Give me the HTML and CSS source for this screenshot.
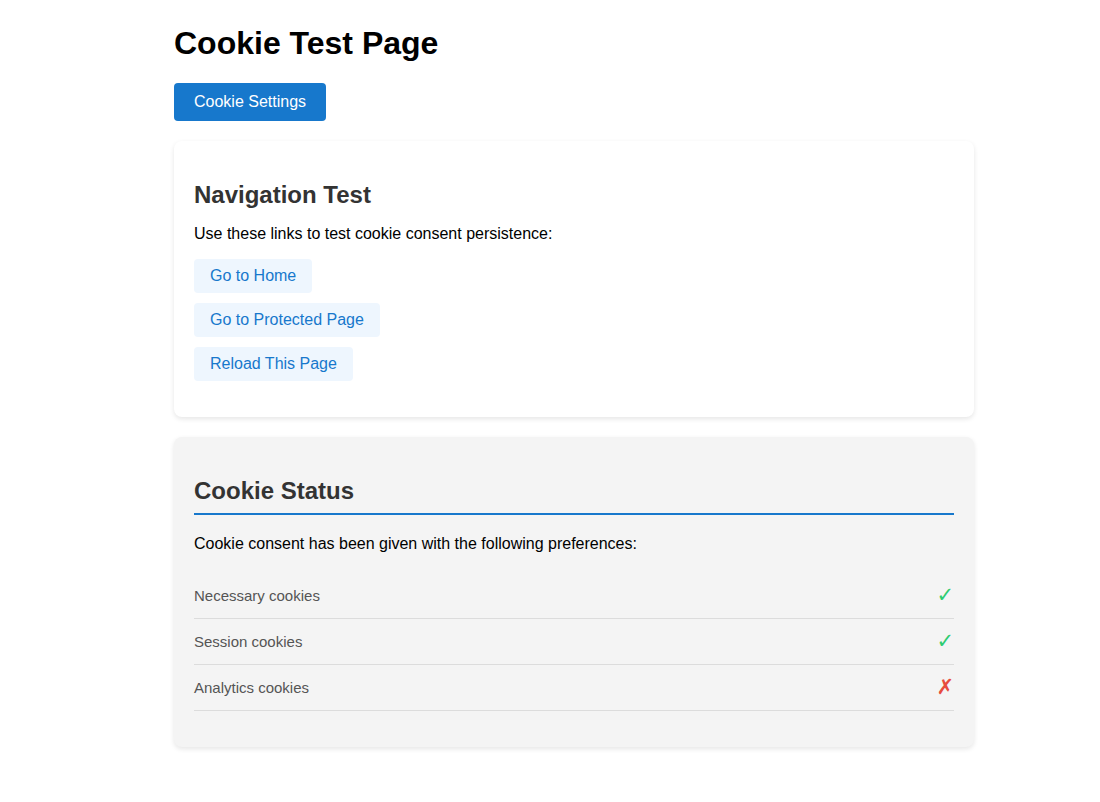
FILE: index.html
```html
<!DOCTYPE html>
<html lang="en">
<head>
<meta charset="utf-8">
<title>Cookie Test Page</title>
<link rel="stylesheet" href="styles.css">
</head>
<body>
<main class="page">
  <h1 class="title">Cookie Test Page</h1>
  <button class="settings-btn" type="button">Cookie Settings</button>

  <section class="card">
    <h2 class="card-title">Navigation Test</h2>
    <p class="text">Use these links to test cookie consent persistence:</p>
    <div class="links">
      <a class="nav-link" href="#">Go to Home</a>
      <a class="nav-link" href="#">Go to Protected Page</a>
      <a class="nav-link" href="#">Reload This Page</a>
    </div>
  </section>

  <section class="card card-status">
    <h2 class="card-title status-title">Cookie Status</h2>
    <p class="text status-text">Cookie consent has been given with the following preferences:</p>
    <div class="prefs">
      <div class="pref-row"><span class="pref-name">Necessary cookies</span><span class="mark yes">✓</span></div>
      <div class="pref-row"><span class="pref-name">Session cookies</span><span class="mark yes">✓</span></div>
      <div class="pref-row"><span class="pref-name">Analytics cookies</span><span class="mark no">✗</span></div>
    </div>
  </section>
</main>
</body>
</html>
```

FILE: styles.css
```css
* { box-sizing: border-box; }

body {
  margin: 0;
  background: #ffffff;
  font-family: "Liberation Sans", Arial, sans-serif;
  color: #000;
}

.page {
  width: 800px;
  margin-left: 174px;
  padding-top: 25px;
  padding-bottom: 40px;
}

.title {
  margin: 0 0 21px;
  font-size: 32px;
  font-weight: bold;
  line-height: 37px;
  color: #000;
}

.settings-btn {
  display: block;
  margin: 0 0 20px;
  padding: 10px 20px;
  border: none;
  border-radius: 4px;
  background: #1778cc;
  color: #fff;
  font-family: "Liberation Sans", Arial, sans-serif;
  font-size: 16px;
  line-height: 18px;
  cursor: pointer;
}

.card {
  background: #fff;
  border-radius: 8px;
  box-shadow: 0 2px 5px rgba(0, 0, 0, 0.1);
  padding: 40px 20px 20px;
  margin-bottom: 20px;
}

.card-status {
  background: #f4f4f4;
}

.card-title {
  margin: 0 0 16px;
  font-size: 24px;
  line-height: 28px;
  font-weight: bold;
  color: #333;
}

.text {
  margin: 0 0 16px;
  font-size: 16px;
  line-height: 18px;
}

.links {
  display: flex;
  flex-direction: column;
  align-items: flex-start;
  gap: 10px;
  margin-bottom: 16px;
}

.nav-link {
  display: inline-block;
  padding: 8px 16px;
  background: #eef6fe;
  color: #1778cc;
  border-radius: 4px;
  text-decoration: none;
  font-size: 16px;
  line-height: 18px;
}

.status-title {
  padding-bottom: 8px;
  border-bottom: 2px solid #1778cc;
  margin-bottom: 20px;
}

.status-text {
  margin-bottom: 20px;
}

.prefs {
  margin-bottom: 16px;
}

.pref-row {
  display: flex;
  justify-content: space-between;
  align-items: center;
  padding: 12px 0;
  border-bottom: 1px solid #dcdcdc;
}

.pref-name {
  font-size: 15px;
  line-height: 17px;
  color: #555;
}

.mark {
  font-family: "DejaVu Sans", sans-serif;
  font-size: 21px;
  line-height: 21px;
}

.mark.yes { color: #2ecc71; }
.mark.no { color: #e74c3c; }
```
